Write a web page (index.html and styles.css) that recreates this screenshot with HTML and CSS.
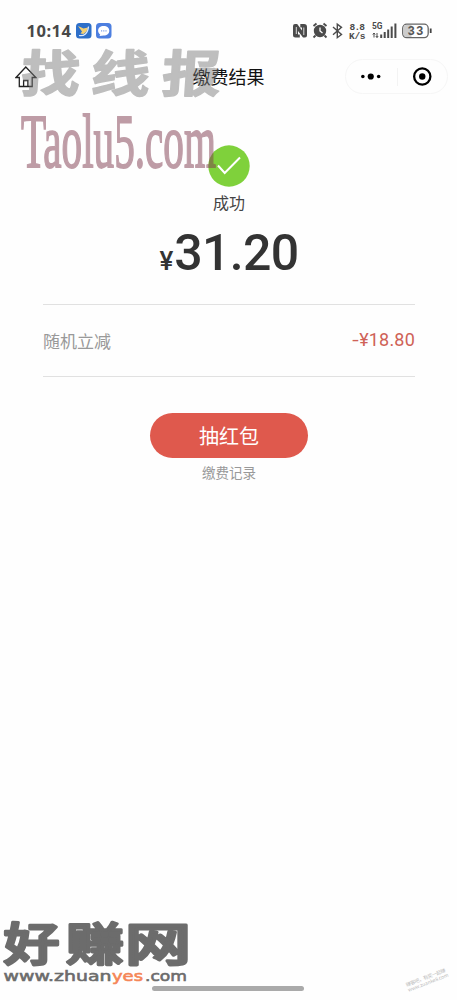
FILE: index.html
```html
<!DOCTYPE html>
<html lang="zh-CN">
<head>
<meta charset="utf-8">
<meta name="viewport" content="width=device-width, initial-scale=1">
<title>缴费结果</title>
<link rel="stylesheet" href="styles.css">
</head>
<body>
<div class="screen">
  <header class="status">
    <svg class="status-left" width="100" height="24" viewBox="0 0 100 24">
      <text class="clock" x="0.500" y="18" textLength="44.500">10:14</text>
      <rect x="50" y="4" width="15.500" height="15.500" rx="3.500" fill="#2d6fc9"/>
      <path d="M52 7 57.500 9.500l4.500-1-1.500 4-3 2.500-3-.5 1.500-2z" fill="#f3cf72"/>
      <path d="M53 16.500c5 1 9-2 9.500-9" fill="none" stroke="#dceaff" stroke-width="1.200"/>
      <rect x="70" y="4" width="15.500" height="15.500" rx="3.500" fill="#4d7fe0"/>
      <path d="M77.700 7c3.400 0 5.600 2 5.600 4.700s-2.200 4.800-5.600 4.800l-4.200.6.700-1.700c-1.300-.9-2.100-2.200-2.100-3.700C72.100 9 74.300 7 77.700 7z" fill="#fff"/>
      <path d="M75 11.800h1.200m1 0h1.200m1 0h1.200" stroke="#7ca0e8" stroke-width="1.200"/>
    </svg>
    <svg class="status-right" width="142" height="24" viewBox="0 0 142 24">
      <path d="M4 5h2.200L11 11.500V8.500H9.300V5H13q3 0 3 3v8.500q0 2-2 2h-2L7 12v3.500h1.800v3H4.500q-2.500 0-2.500-2.500V7q0-2 2-2z" fill="#4b4b4b"/>
      <path d="M5.300 8v7M12.800 8.500v7.500" stroke="#fff" stroke-width=".800"/>
      <path d="m22.500 7 3-2.500M32.500 4.500l3 2.500M24.500 16.500l-2 2M33.500 16.500l2 2" stroke="#4b4b4b" stroke-width="1.800"/>
      <circle cx="29" cy="12" r="6.200" fill="#4b4b4b"/>
      <path d="M29 8.500V12l2.500 2" fill="none" stroke="#fff" stroke-width="1.300"/>
      <path d="m42 8 8.500 7.500-4.200 3.200V5.200l4.200 3.200L42 15.800" fill="none" stroke="#4b4b4b" stroke-width="1.400"/>
      <text class="tiny" x="58.500" y="10.500" textLength="15.500">8.8</text>
      <text class="tiny" x="58" y="19.500" textLength="16.500">K/s</text>
      <text class="tiny gen" x="81" y="10.300" textLength="10.500" lengthAdjust="spacingAndGlyphs">5G</text>
      <path d="M83 14v4.500M86 14v4.500M81.800 15.500 83 14l1.200 1.500M84.800 17l1.200 1.500 1.200-1.500" fill="none" stroke="#4b4b4b"/>
      <path d="M90.200 15.500V19M93.700 13V19M97.200 10.500V19M100.700 7.500V19M104.400 4.500V19" stroke="#4b4b4b" stroke-width="2"/>
      <rect x="111.700" y="5.200" width="25.500" height="13.400" rx="4" fill="#fff" stroke="#666" stroke-width="1.300"/>
      <path d="M115.500 6h5v12h-5q-3 0-3-3V9q0-3 3-3z" fill="#ccc"/>
      <path d="M139.700 9.500v4.500" stroke="#444" stroke-width="1.800"/>
      <text class="battery" x="116.800" y="16.300" textLength="15.500">33</text>
    </svg>
  </header>

  <nav class="navbar">
    <svg class="home" width="22" height="22" viewBox="0 0 22 22" fill="none" stroke="#222" stroke-width="1.300">
      <path d="M1 11.500 10.800 1l10 10.500h-3.600V20.500H4.300V11.500zM8.600 20.500v-6h4.300v6"/>
    </svg>
    <h1 class="title">缴费结果</h1>
    <div class="capsule">
      <svg width="51" height="24" viewBox="0 0 51 24"><circle cx="17" cy="11.500" r="1.800"/><circle cx="25" cy="11.500" r="3.100"/><circle cx="33" cy="11.500" r="1.800"/></svg>
      <span class="capsule-line"></span>
      <svg width="50" height="24" viewBox="0 0 50 24"><circle cx="25.500" cy="11.500" r="8.200" fill="none" stroke="#000" stroke-width="2.300"/><circle cx="25.500" cy="11.500" r="3.200"/></svg>
    </div>
  </nav>

  <main class="result">
    <svg class="check" width="42" height="42" viewBox="0 0 42 42"><circle cx="21" cy="21" r="20.700" fill="#7fd13b"/><path d="m10 20.500 6.700 7.500L32 12.500" fill="none" stroke="#fff" stroke-width="2"/></svg>
    <p class="state">成功</p>
    <p class="amount"><span class="yen">¥</span><span class="sum">31.20</span></p>
    <div class="discount"><span>随机立减</span><span class="minus"><span class="dash">-</span>¥18.80</span></div>
    <button class="draw" type="button">抽红包</button>
    <a class="record">缴费记录</a>
  </main>
  <div class="home-bar"></div>

  <svg class="mark mark-top" width="230" height="135" viewBox="0 0 230 135">
    <g class="brush">
      <text transform="translate(20 47) skewX(-4) scale(1.180 1)">找</text>
      <text transform="translate(90 47) skewX(-4) scale(1.180 1)">线</text>
      <text transform="translate(161 47) skewX(-4) scale(1.180 1)">报</text>
    </g>
    <text class="domain" transform="translate(21 122.300) scale(1 1.820)" textLength="195" lengthAdjust="spacingAndGlyphs">Taolu5.com</text>
  </svg>
  <svg class="mark mark-bottom" width="195" height="80" viewBox="0 0 195 80">
    <g class="block">
      <text x="3.500" y="40.500" textLength="56" lengthAdjust="spacingAndGlyphs">好</text>
      <text x="66" y="40.500" textLength="58" lengthAdjust="spacingAndGlyphs">赚</text>
      <text x="125" y="40.500" textLength="66" lengthAdjust="spacingAndGlyphs">网</text>
    </g>
    <g class="site">
      <text x="3.500" y="60.500" textLength="108" lengthAdjust="spacingAndGlyphs">www.zhuan</text>
      <text class="yes" x="112" y="60.500" textLength="31" lengthAdjust="spacingAndGlyphs">yes</text>
      <text x="145" y="60.500" textLength="42" lengthAdjust="spacingAndGlyphs">.com</text>
    </g>
  </svg>
  <svg class="mark mark-corner" width="57" height="40" viewBox="0 0 57 40">
    <g transform="rotate(-21 8 30)"><text x="8" y="26.500" textLength="42">赚客吧，有奖一起赚</text><text x="8" y="32" textLength="43">www.zuanke8.com</text></g>
  </svg>
</div>
</body>
</html>
```
FILE: styles.css
```css
* { box-sizing: border-box; }
body { margin: 0; background: #fefefe; font-family: "Noto Sans CJK SC", sans-serif; }
p, h1 { margin: 0; }
.screen { position: relative; height: 1000px; overflow: hidden; display: flex; flex-direction: column; }
.status { height: 55px; padding: 19px 24px 0 26px; display: flex; justify-content: space-between; }
.clock { font: 700 16.500px "Noto Sans", sans-serif; fill: #484848; }
.tiny { font: 700 9.500px "Liberation Mono", monospace; fill: #4b4b4b; }
.gen { font: 700 9px Roboto, sans-serif; }
.battery { font: 700 12.500px "Liberation Sans", sans-serif; fill: #555; }
.navbar { height: 43px; padding: 0 9px 0 15px; display: grid; grid-template-columns: 103px 1fr 103px; align-items: center; }
.title { padding-right: 6px; text-align: center; font-size: 18px; line-height: 26px; font-weight: 400; color: #111; transform: translateY(-1px); }
.capsule { height: 35px; border: 1px solid #f6f6f6; border-radius: 18px; display: flex; align-items: center; }
.capsule-line { width: 1px; height: 18px; background: #f3f3f3; }
.result { flex: 1; padding: 47px 42px 0 43px; display: flex; flex-direction: column; align-items: center; }
.check { flex: none; }
.state { margin-top: 3px; font-size: 16px; line-height: 24px; color: #444; }
.amount { height: 90px; padding-top: 9px; display: flex; align-items: baseline; color: #333; font-family: Roboto, sans-serif; font-weight: 500; line-height: 60px; }
.yen { margin-right: 1px; font-size: 26px; }
.sum { font-size: 50px; font-weight: 500; letter-spacing: -0.700px; }
.discount { align-self: stretch; height: 73px; padding-bottom: 1px; border: solid #e1e1e1; border-width: 1px 0; display: flex; align-items: center; justify-content: space-between; font-size: 17px; color: #999; }
.minus { display: flex; padding-bottom: 2px; font-family: Roboto, sans-serif; font-size: 18px; letter-spacing: .2px; color: #cf6257; }
.dash { display: block; transform: scaleX(1.300); margin-right: 1px; }
.draw { width: 158px; height: 45px; margin-top: 36px; padding: 0; border: 0; border-radius: 23px; background: #df594d; color: #fff; font: 20px/45px "Noto Sans CJK SC", sans-serif; }
.record { margin-top: 4px; font-size: 13.500px; line-height: 20px; color: #999; }
.home-bar { width: 152px; height: 5px; margin: 0 0 9px 152px; border-radius: 3px; background: #aaa; }
.mark { position: absolute; pointer-events: none; }
.mark-top { left: 0; top: 45px; overflow: visible; }
.brush { font: 700 50px "Noto Sans CJK SC", sans-serif; fill: #777; stroke: #777; stroke-width: 1.500px; stroke-linejoin: round; opacity: .47; }
.domain { font: 42px "Liberation Serif", serif; fill: #803c50; stroke: #803c50; stroke-width: 1px; opacity: .5; }
.mark-bottom { left: 0; top: 920px; overflow: visible; }
.block { font: 500 45px "Noto Sans CJK SC", sans-serif; fill: #6c6c6c; stroke: #6c6c6c; stroke-width: 2.800px; stroke-linejoin: round; }
.site { font: 14.500px "DejaVu Sans", sans-serif; fill: #6c6c6c; stroke: #6c6c6c; stroke-width: .6px; }
.yes { fill: #f58657; stroke: #f58657; }
.mark-corner { right: 0; bottom: 0; font: 5px "Noto Sans CJK SC", sans-serif; fill: #bbb; }
```
